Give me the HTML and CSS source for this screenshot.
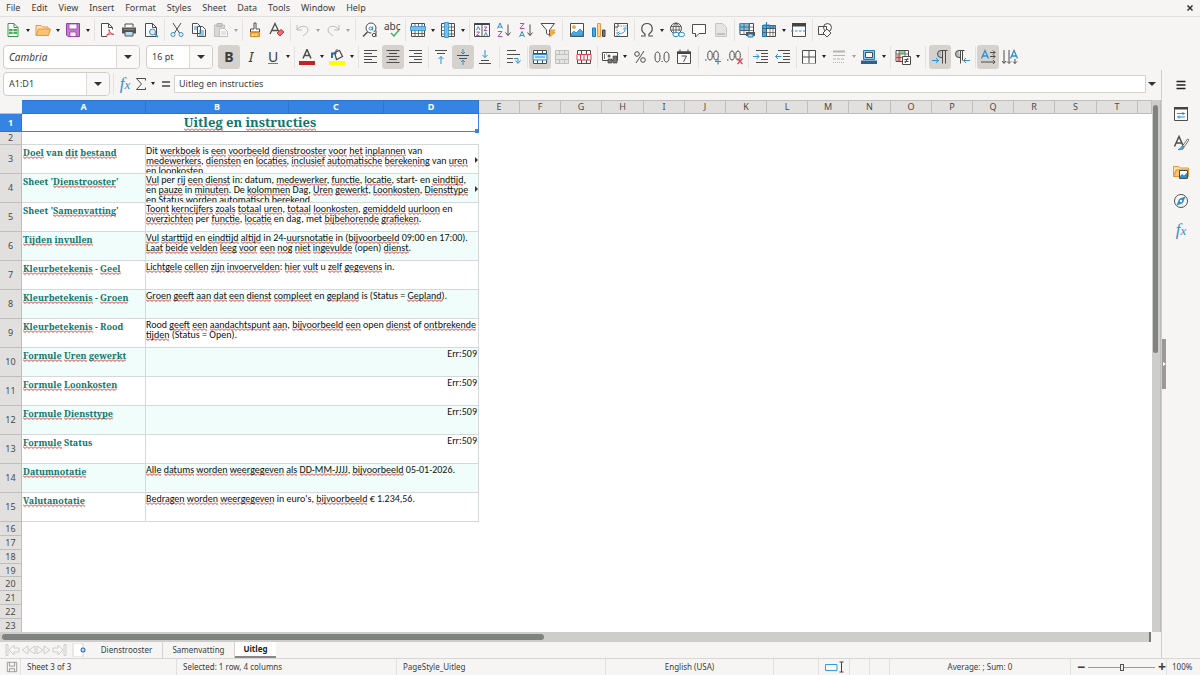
FILE: index.html
```html
<!DOCTYPE html>
<html lang="nl">
<head>
<meta charset="utf-8">
<title>Dienstrooster - Uitleg</title>
<link rel="stylesheet" href="styles.css">
</head>
<body>
<div class="app">
<nav class="menubar" aria-label="Menu">
<button>File</button><button>Edit</button><button>View</button><button>Insert</button><button>Format</button><button>Styles</button><button>Sheet</button><button>Data</button><button>Tools</button><button>Window</button><button>Help</button>
<button class="close" aria-label="Close"><svg viewBox="0 0 8 8" width="8" height="8"><path d="M1.5 1.5l5 5M6.500 1.500l-5 5" stroke="#2e3436" stroke-width="1.500"/></svg></button>
</nav>

<div class="toolbar standard" role="toolbar" aria-label="Standard">
<button class="tb" aria-label="New"><svg viewBox="0 0 16 16"><path class="w" d="M3 1.500h6l4 4v9H3z" stroke="#3a9b4e"/><path d="M9 1.500v4h4" stroke="#3a9b4e"/><path d="M4 7h8v5H4z" fill="#43b35a"/><path d="M4 9.500h8M8 7v5" stroke="#fff" stroke-width=".7"/></svg></button><button class="dd" aria-label="New options"></button>
<button class="tb" aria-label="Open"><svg viewBox="0 0 16 16"><path d="M1 13V3.500h5l1.500 1.500H13v2" fill="#fde3b4" stroke="#e8983a"/><path d="M1 13.500L3.500 7H15.500l-2 6.500z" fill="#fac373" stroke="#e8983a"/></svg></button><button class="dd" aria-label="Open options"></button>
<button class="tb" aria-label="Save"><svg viewBox="0 0 16 16"><path d="M1.500 1.500h13v13H3l-1.500-1.500z" fill="#c778d4" stroke="#9a3daa"/><path d="M4 2h8v5H4z" fill="#fff" stroke="#9a3daa" stroke-width=".8"/><path d="M5 10h6v4.500H5z" fill="#fff" stroke="#9a3daa" stroke-width=".8"/></svg></button><button class="dd" aria-label="Save options"></button>
<i class="sep"></i>
<button class="tb" aria-label="Export as PDF"><svg viewBox="0 0 16 16"><path class="w k" d="M2.500 1.500h7l4 4v9h-11z"/><path class="k" d="M9.500 1.500v4h4"/><path class="w" d="M8 7.500h8V16H8z"/><path d="M10 7.500c.5 2.500 2 4.500 5 5M10 7.500c1 3-.5 5.500-3 7M7.500 13c2-1 5-1.500 7.500-.500" stroke="#e0404c"/></svg></button>
<button class="tb" aria-label="Print"><svg viewBox="0 0 16 16"><path class="w k" d="M4 5V2h8v3"/><path d="M1 5.500h14v6H1z" fill="#555"/><path d="M4 9.500h8v4.500H4z" fill="#b9ddf4" stroke="#555"/><path d="M3 7.500h10" stroke="#36a0dc"/></svg></button>
<button class="tb" aria-label="Print preview"><svg viewBox="0 0 16 16"><path class="w k" d="M2.500 1.500h7l4 4v9h-11z"/><path class="k" d="M9.500 1.500v4h4"/><circle cx="9.500" cy="10" r="3" fill="#d8edfa" stroke="#2f8fd0"/><path d="M12 12l3 3" stroke="#2f8fd0" stroke-width="1.500"/></svg></button>
<i class="sep"></i>
<button class="tb" aria-label="Cut"><svg viewBox="0 0 16 16"><path class="k" d="M4 1l6.500 10M12 1L5.500 11"/><circle cx="4" cy="12.500" r="2" stroke="#2f8fd0"/><circle cx="12" cy="12.500" r="2" stroke="#2f8fd0"/></svg></button>
<button class="tb" aria-label="Copy"><svg viewBox="0 0 16 16"><path class="w k" d="M1.500 1.500h5l3 3v7h-8zM6.500 4.500h5l3 3v7h-8z"/><path d="M3 5h3M3 7h3M8 9h5M8 11h5M8 13h5" stroke="#2f8fd0"/></svg></button>
<button class="tb dim" aria-label="Paste" disabled><svg viewBox="0 0 16 16"><path d="M1.500 3h10v11.500h-10z" fill="#ccc" stroke="#aaa"/><path d="M4 1.500h5v3H4z" fill="#bbb" stroke="#999"/><path class="w" d="M6.500 6.500h5l3 3v5h-8z" stroke="#aaa"/><path d="M8 10h5M8 12h5" stroke="#bbb"/></svg></button><button class="dd dim" aria-label="Paste options" disabled></button>
<i class="sep"></i>
<button class="tb" aria-label="Clone formatting"><svg viewBox="0 0 16 16"><path class="w k" d="M7 1h2v6h3.500v3h-9V7H7z"/><path d="M3.500 10.500h9v4H3.500z" fill="#f7b24a" stroke="#d98a20"/><path d="M6 12v2M9 12v2" stroke="#fff"/></svg></button>
<button class="tb" aria-label="Clear formatting"><svg viewBox="0 0 16 16"><path class="k" d="M1 12L6 1.500 10 10M3 8.500h6" stroke-width="1.300"/><path d="M8 11l4-3.500 3 2.500-4 4z" fill="#f06a70" stroke="#d9303a"/></svg></button>
<i class="sep"></i>
<button class="tb dim" aria-label="Undo" disabled><svg viewBox="0 0 16 16"><path d="M2 3v5h5M2 8c3-5 11-5 11 0 0 3-3 4-5 6" stroke="#a4a3a2"/></svg></button><button class="dd dim" aria-label="Undo list" disabled></button>
<button class="tb dim" aria-label="Redo" disabled><svg viewBox="0 0 16 16"><path d="M14 3v5H9M14 8C11 3 3 3 3 8c0 3 3 4 5 6" stroke="#a4a3a2"/></svg></button><button class="dd dim" aria-label="Redo list" disabled></button>
<i class="sep wide"></i>
<button class="tb" aria-label="Find and replace"><svg viewBox="0 0 16 16"><circle cx="9" cy="6" r="5" class="w k"/><path class="k" d="M5.500 10L1 14.500" stroke-width="1.500"/><circle cx="8.500" cy="6.500" r="1.500" stroke="#2f8fd0"/><path d="M10.500 4.500v4" stroke="#2f8fd0"/><path class="w" d="M9.500 10h6v6h-6z"/><circle cx="12" cy="13" r="1.700" class="w k"/><path class="k" d="M14 8.500V15"/></svg></button>
<button class="tb" aria-label="Spelling"><span class="abc">abc</span><svg class="tick" viewBox="0 0 16 16"><path d="M7 11l3 3 5-6" stroke="#3fae5c" stroke-width="1.400"/></svg></button>
<i class="sep"></i>
<button class="tb" aria-label="Row"><svg viewBox="0 0 16 16"><path class="w k" d="M1.500 1.500h13v13h-13z"/><path class="k" d="M1.500 11.500h13M5 1.500v13M8.500 1.500v13M12 1.500v13" stroke-width=".8"/><path d="M.5 4.500h15v4H.5z" fill="#79bdea" stroke="#2f8fd0" stroke-width=".8"/></svg></button><button class="dd" aria-label="Row options"></button>
<button class="tb" aria-label="Column"><svg viewBox="0 0 16 16"><path class="w k" d="M1.500 1.500h13v13h-13z"/><path class="k" d="M1.500 5h13M1.500 8.500h13M1.500 12h13M11.500 1.500v13" stroke-width=".8"/><path d="M4.500 .5h4v15h-4z" fill="#79bdea" stroke="#2f8fd0" stroke-width=".8"/></svg></button><button class="dd" aria-label="Column options"></button>
<i class="sep"></i>
<button class="tb" aria-label="Sort"><svg viewBox="0 0 16 16"><path class="w k" d="M.5 1.500h15v13H.5zM8 2v12"/><path d="M.5 1h15v2H.5z" fill="#444"/><path d="M2.500 8L4.200 4.500 6 8M10 14l1.800-3.500L13.500 14" stroke="#2f8fd0"/><path d="M2.500 10h3l-3 3.500h3M10 5h3l-3 3.500h3" stroke="#b04cc0"/></svg></button>
<button class="tb" aria-label="Sort ascending"><svg viewBox="0 0 16 16"><path d="M1.500 6.500L4 1l2.500 5.500M2.300 5h3.400" stroke="#2f8fd0"/><path d="M2 9.500h4l-4 5h4.500" stroke="#b04cc0"/><path class="k" d="M12 2.500v11M9.500 10.500l2.500 3 2.500-3"/></svg></button>
<button class="tb" aria-label="Sort descending"><svg viewBox="0 0 16 16"><path d="M1.500 15L4 9.500 6.500 15M2.300 13.500h3.400" stroke="#2f8fd0"/><path d="M2 1.500h4l-4 5h4.500" stroke="#b04cc0"/><path class="k" d="M12 2.500v11M9.500 10.500l2.500 3 2.500-3"/></svg></button>
<button class="tb" aria-label="AutoFilter"><svg viewBox="0 0 16 16"><path class="w k" d="M1 1.500h13.500L9.500 8v5.500l-3-2V8z"/><path d="M11 8h4l-2 2.500h2L9.500 15l1.500-4H9.500z" fill="#f7b24a" stroke="#e08d25" stroke-width=".7"/></svg></button>
<i class="sep wide"></i>
<button class="tb" aria-label="Insert image"><svg viewBox="0 0 16 16"><path class="w k" d="M1.500 1.500h13v13h-13z"/><path d="M2 14v-2l3-3 2 2 4-4 3 3v4z" fill="#4ba7e0" stroke="#1e7cb8" stroke-width=".7"/><circle cx="5" cy="5" r="1.500" fill="#f7b24a" stroke="#e08d25" stroke-width=".6"/></svg></button>
<button class="tb" aria-label="Insert chart"><svg viewBox="0 0 16 16"><path d="M1.500 6h3v8.500h-3z" fill="#4ba7e0" stroke="#1e7cb8"/><path d="M6.500 1.500h3v13h-3z" fill="#fad29a" stroke="#e8983a"/><path d="M11.500 8h2.500v6.500h-2.500z" fill="#777" stroke="#444"/></svg></button>
<button class="tb" aria-label="Pivot table"><svg viewBox="0 0 16 16"><path class="w k" d="M1.500 1.500h13v13h-13zM5 1.500v3.500H1.500"/><path d="M5 4h9M4 5v9" stroke="#888" stroke-dasharray="1.500 1"/><path d="M6 11.500c4 0 6-1 6-5M4.500 11.500l2-2M4.500 11.500l2 2M12 5.500l-2 2M12 5.500l2 2" stroke="#2f8fd0"/></svg></button>
<i class="sep"></i>
<button class="tb" aria-label="Special character"><svg viewBox="0 0 16 16"><path class="k" d="M2 14h4v-2C1 9 2 1.500 8 1.500s7 7.500 2 10.500v2h4" stroke-width="1.200"/></svg></button><button class="dd" aria-label="Special character options"></button>
<button class="tb" aria-label="Hyperlink"><svg viewBox="0 0 16 16"><circle class="k" cx="7" cy="6.500" r="5.500"/><path class="k" d="M7 1v9M2 4.500h10M1.500 8h10M7 1C3.500 4 3.500 8 5 11M7 1c3.500 3 3.500 6 3 8" stroke-width=".8"/><path class="w" d="M5 10.500h4v4H5zM11 10.500h4v4h-4z" stroke="none"/><rect x="4" y="10.500" width="6" height="4" rx="2" stroke="#2f8fd0"/><rect x="9.500" y="10.500" width="6" height="4" rx="2" stroke="#2f8fd0"/></svg></button>
<button class="tb" aria-label="Comment"><svg viewBox="0 0 16 16"><path class="w k" d="M1.500 2.500h13v9H8L4.500 15v-3.500h-3z"/></svg></button>
<button class="tb dim" aria-label="Headers and footers" disabled><svg viewBox="0 0 16 16"><path d="M2.500 1.500h7l4 4v9h-11z" fill="#ddd" stroke="#b0b0b0"/><path d="M4 11h8v2H4z" fill="#aaa"/></svg></button>
<i class="sep"></i>
<button class="tb" aria-label="Print area"><svg viewBox="0 0 16 16"><path class="w k" d="M1 1.500h13.500v11H1z"/><path d="M1 1.500h9.500v7H1z" fill="#79bdea" stroke="#2f8fd0"/><path class="k" d="M1 5h13.500M1 8.500h13.500M5 1.500v11M10 1.500v11" stroke-width=".7"/><path d="M7 10h9v4H7z" fill="#555"/><path d="M9 12h5v3H9z" fill="#b9ddf4" stroke="#2876ad"/></svg></button>
<button class="tb" aria-label="Freeze rows and columns"><svg viewBox="0 0 16 16"><path class="w k" d="M1.500 3.500h13v11h-13z"/><path d="M1.500 3.500h13v3h-9v8h-4z" fill="#4ba7e0" stroke="#1e7cb8"/><path class="k" d="M5.500 3.500v11M9 3.500v11M12 3.500v11M1.500 6.500h13M1.500 10.500h13" stroke-width=".7"/><path d="M5.500 0v6M2.500 3l6 0" stroke="#1e7cb8"/></svg></button><button class="dd" aria-label="Freeze options"></button>
<button class="tb" aria-label="Split window"><svg viewBox="0 0 16 16"><path class="w k" d="M1.500 1.500h13v13h-13z"/><path d="M1 1h14v3.500H1z" fill="#444"/><path d="M0 9h16" stroke="#2f8fd0" stroke-dasharray="2.500 1.500"/></svg></button>
<i class="sep"></i>
<button class="tb" aria-label="Draw functions"><svg viewBox="0 0 16 16"><path class="k" d="M1.500 4.500h8v8h-8z"/><circle class="k" cx="10.500" cy="5.500" r="4"/><path class="w k" d="M10 7l4 4-4 4-4-4z"/></svg></button>
</div>

<div class="toolbar format" role="toolbar" aria-label="Formatting">
<div class="combo font"><input aria-label="Font name" value="Cambria"><button aria-label="Font list"></button></div>
<div class="combo size"><input aria-label="Font size" value="16 pt"><button aria-label="Size list"></button></div>
<button class="tb on letter" aria-label="Bold"><b>B</b></button>
<button class="tb letter" aria-label="Italic"><em>I</em></button>
<button class="tb letter" aria-label="Underline"><span class="ul">U</span></button><button class="dd" aria-label="Underline options"></button>
<i class="sep"></i>
<button class="tb" aria-label="Font colour"><svg viewBox="0 0 16 16"><path class="k" d="M4 9.500L8 .5l4 9M5.500 6.500h5" stroke-width="1.500"/><path d="M0 12h16v4H0z" fill="#c9211e"/></svg></button><button class="dd" aria-label="Font colour options"></button>
<button class="tb" aria-label="Background colour"><svg viewBox="0 0 16 16"><path class="w k" d="M5.500 3.500l5-2 3 6-6 3z" stroke-width="1.300"/><path d="M3 9V4.500h4" stroke="#2f6fa8" stroke-width="2"/><path class="k" d="M7 5V1.500c0-1 2-1 2 0"/><path d="M0 12h16v4H0z" fill="#ff0"/></svg></button><button class="dd" aria-label="Background colour options"></button>
<i class="sep"></i>
<button class="tb" aria-label="Align left"><svg viewBox="0 0 16 16"><path class="k" d="M1 1.500h13M1 4.500h8M1 7.500h13M1 10.500h8M1 13.500h13"/></svg></button>
<button class="tb on" aria-label="Center horizontally"><svg viewBox="0 0 16 16"><path class="k" d="M1.500 1.500h13M4 4.500h8M1.500 7.500h13M4 10.500h8M1.500 13.500h13"/></svg></button>
<button class="tb" aria-label="Align right"><svg viewBox="0 0 16 16"><path class="k" d="M2 1.500h13M7 4.500h8M2 7.500h13M7 10.500h8M2 13.500h13"/></svg></button>
<i class="sep"></i>
<button class="tb" aria-label="Align top"><svg viewBox="0 0 16 16"><path class="k" d="M2 1.500h12M4 4.500h8"/><path d="M8 15V7.500M5.500 10L8 7.500l2.500 2.500" stroke="#2f8fd0"/></svg></button>
<button class="tb on" aria-label="Center vertically"><svg viewBox="0 0 16 16"><path class="k" d="M2 6.500h12M4 9.500h8"/><path d="M8 0v5M6 3l2 2 2-2M8 16v-5M6 13l2-2 2 2" stroke="#2f8fd0"/></svg></button>
<button class="tb" aria-label="Align bottom"><svg viewBox="0 0 16 16"><path class="k" d="M2 14.500h12M4 11.500h8"/><path d="M8 1v7.500M5.500 6L8 8.500 10.500 6" stroke="#2f8fd0"/></svg></button>
<i class="sep wide"></i>
<button class="tb" aria-label="Wrap text"><svg viewBox="0 0 16 16"><path class="k" d="M1 1.500h9M1 5.500h13M1 9.500h6M1 13.500h6"/><path d="M8 9.500h4v4M9.500 11.500l2.500 3 2.500-3" stroke="#2f8fd0"/></svg></button>
<i class="sep"></i>
<button class="tb on" aria-label="Merge cells"><svg viewBox="0 0 16 16"><path class="w k" d="M1.500 1.500h13v13h-13zM5.500 1.500v13M10.500 1.500v13M1.500 4.500h13"/><path d="M1 5.500h14v5.500H1z" fill="#d8edfa" stroke="#2f8fd0"/><path d="M3 8h10" stroke="#2f8fd0"/></svg></button>
<button class="tb dim" aria-label="Merge and center" disabled><svg viewBox="0 0 16 16"><path d="M1.500 1.500h13v13h-13zM5.500 1.500v4M10.500 1.500v4M5.500 10.500v4M10.500 10.500v4M1.500 5.500h13M1.500 10.500h13" fill="#ddd" stroke="#aaa"/></svg></button>
<button class="tb" aria-label="Split cells"><svg viewBox="0 0 16 16"><path class="w k" d="M1.500 1.500h13v13h-13zM5.500 1.500v13M10.500 1.500v13"/><path class="w" d="M1 5.500h14v5.500H1zM4.500 5.500V11M8 5.500V11M11.500 5.500V11" stroke="#e0404c"/></svg></button>
<i class="sep"></i>
<button class="tb" aria-label="Currency format"><svg viewBox="0 0 16 16"><path class="w k" d="M.5 3.500h15v8H.5z"/><circle cx="7" cy="7" r="1.500" fill="#555"/><path d="M2.500 5v5M4 5h1" stroke="#777"/><path d="M6 10h4v4H6zM11 7h4v7h-4z" fill="#777" stroke="#333" stroke-width=".6"/></svg></button><button class="dd" aria-label="Currency options"></button>
<button class="tb" aria-label="Percent format"><svg viewBox="0 0 16 16"><circle class="k" cx="5" cy="5" r="2.300"/><circle class="k" cx="11" cy="11" r="2.300"/><path class="k" d="M12 2L4 14"/></svg></button>
<button class="tb" aria-label="Number format"><svg viewBox="0 0 16 16"><ellipse class="k" cx="3.500" cy="8" rx="2.500" ry="5"/><ellipse class="k" cx="12.500" cy="8" rx="2.500" ry="5"/><path class="k" d="M7.500 12.500h1.200"/></svg></button>
<button class="tb" aria-label="Date format"><svg viewBox="0 0 16 16"><path class="w k" d="M1.500 3h13v11.500h-13z"/><path d="M1 2.500h14V5H1z" fill="#444"/><path class="k" d="M4 .5v3M12 .5v3M5.500 7h5l-3 6"/></svg></button>
<i class="sep wide"></i>
<button class="tb" aria-label="Add decimal place"><svg viewBox="0 0 16 16"><ellipse class="k" cx="5" cy="6.500" rx="2.300" ry="4.500"/><ellipse class="k" cx="11" cy="6.500" rx="2.300" ry="4.500"/><path d="M0 11h1.500" stroke="#444"/><path d="M10 12.500h6M13 9.500v6" stroke="#2f8fd0" stroke-width="1.200"/></svg></button>
<button class="tb" aria-label="Delete decimal place"><svg viewBox="0 0 16 16"><ellipse class="k" cx="5" cy="6.500" rx="2.300" ry="4.500"/><ellipse class="k" cx="11" cy="6.500" rx="2.300" ry="4.500"/><path d="M0 11h1.500" stroke="#444"/><path d="M10.500 9.500l5 5.500M15.500 9.500l-5 5.500" stroke="#e0404c" stroke-width="1.200"/></svg></button>
<i class="sep"></i>
<button class="tb" aria-label="Increase indent"><svg viewBox="0 0 16 16"><path class="k" d="M3 1.500h12M8 4.500h7M8 7.500h7M8 10.500h7M3 13.500h12"/><path d="M0 7.500h6M3.500 5L6 7.500 3.500 10" stroke="#2f8fd0"/></svg></button>
<button class="tb" aria-label="Decrease indent"><svg viewBox="0 0 16 16"><path class="k" d="M3 1.500h12M8 4.500h7M8 7.500h7M8 10.500h7M3 13.500h12"/><path d="M6.500 7.500h-6M3 5L.5 7.500 3 10" stroke="#2f8fd0"/></svg></button>
<i class="sep"></i>
<button class="tb" aria-label="Borders"><svg viewBox="0 0 16 16"><path class="w k" d="M1.500 1.500h13v13h-13zM8 1.500v13M1.500 8h13"/><path d="M1.500 14.500h13" stroke="#e8983a"/></svg></button><button class="dd" aria-label="Border options"></button>
<button class="tb dim" aria-label="Border style" disabled><svg viewBox="0 0 16 16"><path d="M2 2.500h12" stroke="#999" stroke-width="2"/><path d="M2 6.500h12" stroke="#999"/><path d="M2 10h12" stroke="#999" stroke-dasharray="3 1"/><path d="M2 13.500h12" stroke="#999" stroke-dasharray="1 1"/></svg></button><button class="dd dim" aria-label="Border style options" disabled></button>
<button class="tb" aria-label="Border colour"><svg viewBox="0 0 16 16"><path d="M2.500 1.500h11v9h-11z" fill="#8cc8ee" stroke="#1e7cb8"/><path class="w k" d="M4.500 3.500h7v5h-7z"/><path d="M0 11.500h16V15H0z" fill="#2a6099"/></svg></button><button class="dd" aria-label="Border colour options"></button>
<i class="sep"></i>
<button class="tb" aria-label="Conditional formatting"><svg viewBox="0 0 16 16"><path class="w k" d="M1 1.500h12.500v11H1z"/><path d="M4 2h6v3H4z" fill="#7ed491"/><path d="M1.500 5.500H6V12H1.500z" fill="#f29a9a"/><path class="k" d="M1 5h12.500M1 8.500h12.500M4 1.500v11M10 1.500v11" stroke-width=".7"/><path class="w k" d="M7.500 7.500h8v8h-8zM9.500 10.500h4M9.500 12.500h4M13 9l-3 5"/></svg></button><button class="dd" aria-label="Conditional options"></button>
<i class="sep wide"></i>
<button class="tb on" aria-label="Left to right"><svg viewBox="0 0 16 16"><path d="M9 1.500a3.500 3.500 0 000 7z" fill="#bbb"/><path class="k" d="M15.500 1.500H9a3.500 3.500 0 000 7h1M10.500 1.500v13M13.500 1.500v13"/><path d="M0 11.500h6.500M4 9l2.500 2.500L4 14" stroke="#2f8fd0"/></svg></button>
<button class="tb" aria-label="Right to left"><svg viewBox="0 0 16 16"><path d="M5 1.500a3.500 3.500 0 000 7h1z" fill="#bbb"/><path class="k" d="M10.500 1.500H5a3.500 3.500 0 000 7h1M6.500 1.500v13M8.500 1.500v10"/><path d="M16 11.500H9.500M12 9l-2.500 2.500L12 14" stroke="#2f8fd0"/></svg></button>
<i class="sep"></i>
<button class="tb on" aria-label="Text direction horizontal"><svg viewBox="0 0 16 16"><path d="M1.500 9.500l3.500-8 3.500 8M2.500 7h5" stroke="#2f8fd0" stroke-width="1.300"/><path class="k" d="M10 3.500h5M13 1.500l2 2-2 2M10 7.500h5M13 5.500l2 2-2 2M1 13h14M13 11l2 2-2 2"/></svg></button>
<button class="tb" aria-label="Text direction vertical"><svg viewBox="0 0 16 16"><path d="M8.500 9.500l3.500-8 3.500 8M9.500 7h5" stroke="#2f8fd0" stroke-width="1.300"/><path class="k" d="M2 1v13M0 12l2 2.500L4 12M7 1v13M5 12.500l2 2 2-2M13 10v4.500M11 12.500l2 2 2-2"/></svg></button>
</div>

<div class="body">
<main class="main">
<div class="formula">
<div class="combo name"><input aria-label="Name box" value="A1:D1"><button aria-label="Named ranges"></button></div>
<i class="sep"></i>
<button class="fx" aria-label="Function wizard">f<small>x</small></button>
<button class="sigma" aria-label="Select function"><svg viewBox="0 0 12 14" width="12" height="14"><path class="k" d="M10.500 3.500v-2h-9L6.500 7l-5 5.500h9v-2"/></svg></button><button class="dd" aria-label="Function options"></button>
<button class="eq" aria-label="Formula"><svg viewBox="0 0 10 8" width="10" height="8"><path d="M1 2h8M1 6h8" stroke="#444" stroke-width="1.300"/></svg></button>
<input class="line" aria-label="Input line" value="Uitleg en instructies">
<button class="dd big" aria-label="Expand formula bar"></button>
</div>
<div class="view">
<div class="sheet">
<table>
<colgroup><col class="c-h"><col class="c-a"><col class="c-b"><col class="c-c"><col class="c-c"><col class="c-n"><col class="c-n"><col class="c-n"><col class="c-w"><col class="c-n"><col class="c-n"><col class="c-n"><col class="c-n"><col class="c-n"><col class="c-w"><col class="c-n"><col class="c-n"><col class="c-n"><col class="c-n"><col class="c-w"><col class="c-n"><col></colgroup>
<thead><tr><td class="corner"></td><th class="sel">A</th><th class="sel">B</th><th class="sel">C</th><th class="sel">D</th><th>E</th><th>F</th><th>G</th><th>H</th><th>I</th><th>J</th><th>K</th><th>L</th><th>M</th><th>N</th><th>O</th><th>P</th><th>Q</th><th>R</th><th>S</th><th>T</th><th></th></tr></thead>
<tbody>
<tr class="r1"><th class="sel">1</th><td class="title" colspan="4"><u>Uitleg</u> en <u>instructies</u></td></tr>
<tr class="r2"><th>2</th><td class="under" colspan="4"></td></tr>
<tr class="r"><th>3</th><td class="a"><u>Doel</u> van <u>dit</u> <u>bestand</u></td><td class="b more" colspan="3"><div>Dit <u>werkboek</u> is <u>een</u> <u>voorbeeld</u> <u>dienstrooster</u> <u>voor</u> <u>het</u> <u>inplannen</u> van<br><u>medewerkers</u>, <u>diensten</u> en <u>locaties</u>, <u>inclusief</u> <u>automatische</u> <u>berekening</u> van <u>uren</u><br><u>en</u> <u>loonkosten</u>.</div></td></tr>
<tr class="r alt"><th>4</th><td class="a">Sheet '<u>Dienstrooster</u>'</td><td class="b more" colspan="3"><div><u>Vul</u> per <u>rij</u> <u>een</u> <u>dienst</u> in: datum, <u>medewerker</u>, <u>functie</u>, <u>locatie</u>, start- en <u>eindtijd</u>,<br>en <u>pauze</u> in <u>minuten</u>. De <u>kolommen</u> Dag, <u>Uren</u> <u>gewerkt</u>, <u>Loonkosten</u>, <u>Diensttype</u><br>en Status <u>worden</u> <u>automatisch</u> <u>berekend</u>.</div></td></tr>
<tr class="r"><th>5</th><td class="a">Sheet '<u>Samenvatting</u>'</td><td class="b" colspan="3"><div><u>Toont</u> <u>kerncijfers</u> <u>zoals</u> <u>totaal</u> <u>uren</u>, <u>totaal</u> <u>loonkosten</u>, <u>gemiddeld</u> <u>uurloon</u> en<br><u>overzichten</u> per <u>functie</u>, <u>locatie</u> en dag, met <u>bijbehorende</u> <u>grafieken</u>.</div></td></tr>
<tr class="r alt"><th>6</th><td class="a"><u>Tijden</u> <u>invullen</u></td><td class="b" colspan="3"><div><u>Vul</u> <u>starttijd</u> en <u>eindtijd</u> <u>altijd</u> in 24-<u>uursnotatie</u> in (<u>bijvoorbeeld</u> 09:00 en 17:00).<br><u>Laat</u> <u>beide</u> <u>velden</u> <u>leeg</u> <u>voor</u> <u>een</u> <u>nog</u> <u>niet</u> <u>ingevulde</u> (open) <u>dienst</u>.</div></td></tr>
<tr class="r"><th>7</th><td class="a"><u>Kleurbetekenis</u> - <u>Geel</u></td><td class="b" colspan="3"><div><u>Lichtgele</u> <u>cellen</u> <u>zijn</u> <u>invoervelden</u>: <u>hier</u> <u>vult</u> u <u>zelf</u> <u>gegevens</u> in.</div></td></tr>
<tr class="r alt"><th>8</th><td class="a"><u>Kleurbetekenis</u> - <u>Groen</u></td><td class="b" colspan="3"><div><u>Groen</u> <u>geeft</u> <u>aan</u> <u>dat</u> <u>een</u> <u>dienst</u> <u>compleet</u> en <u>gepland</u> is (Status = <u>Gepland</u>).</div></td></tr>
<tr class="r"><th>9</th><td class="a"><u>Kleurbetekenis</u> - Rood</td><td class="b" colspan="3"><div>Rood <u>geeft</u> <u>een</u> <u>aandachtspunt</u> <u>aan</u>, <u>bijvoorbeeld</u> <u>een</u> open <u>dienst</u> of <u>ontbrekende</u><br><u>tijden</u> (Status = Open).</div></td></tr>
<tr class="r alt"><th>10</th><td class="a"><u>Formule</u> <u>Uren</u> <u>gewerkt</u></td><td class="b err" colspan="3"><div>Err:509</div></td></tr>
<tr class="r"><th>11</th><td class="a"><u>Formule</u> <u>Loonkosten</u></td><td class="b err" colspan="3"><div>Err:509</div></td></tr>
<tr class="r alt"><th>12</th><td class="a"><u>Formule</u> <u>Diensttype</u></td><td class="b err" colspan="3"><div>Err:509</div></td></tr>
<tr class="r"><th>13</th><td class="a"><u>Formule</u> Status</td><td class="b err" colspan="3"><div>Err:509</div></td></tr>
<tr class="r alt"><th>14</th><td class="a"><u>Datumnotatie</u></td><td class="b" colspan="3"><div><u>Alle</u> <u>datums</u> <u>worden</u> <u>weergegeven</u> <u>als</u> <u>DD-MM-JJJJ</u>, <u>bijvoorbeeld</u> 05-01-2026.</div></td></tr>
<tr class="r"><th>15</th><td class="a"><u>Valutanotatie</u></td><td class="b" colspan="3"><div><u>Bedragen</u> <u>worden</u> <u>weergegeven</u> in euro's, <u>bijvoorbeeld</u> € 1.234,56.</div></td></tr>
<tr class="e"><th>16</th></tr><tr class="e"><th>17</th></tr><tr class="e"><th>18</th></tr><tr class="e short"><th>19</th></tr><tr class="e"><th>20</th></tr><tr class="e"><th>21</th></tr><tr class="e"><th>22</th></tr><tr class="e"><th>23</th></tr>
</tbody>
</table>
</div>
<div class="vscroll"><span></span></div>
</div>
<div class="hscroll"><span></span></div>
<div class="tabs">
<div class="nav">
<button aria-label="First sheet"><svg viewBox="0 0 15 12"><path d="M1 .5v11h2V.5zM4 6l5-5v3h5v4H9v3z"/></svg></button><button aria-label="Previous sheet"><svg viewBox="0 0 15 12"><path d="M1 6l6-4v8zM8 6l6-4v8z"/></svg></button><button aria-label="Next sheet"><svg viewBox="0 0 15 12"><path d="M7 6L1 2v8zM14 6L8 2v8z"/></svg></button><button aria-label="Last sheet"><svg viewBox="0 0 15 12"><path d="M14 .5v11h-2V.5zM11 6L6 1v3H1v4h5v3z"/></svg></button>
</div>
<button class="add" aria-label="Add sheet"><svg viewBox="0 0 14 14" width="14" height="14"><path d="M1 0h9l1 2v12H1z" fill="#fff" stroke="#d8d6d4"/><circle cx="11" cy="7" r="2.500" fill="#2a6fb5"/><path d="M11 5.500v3M9.500 7h3" stroke="#fff"/></svg></button>
<button class="tab">Dienstrooster</button><button class="tab">Samenvatting</button><button class="tab active">Uitleg</button>
</div>
</main>
<aside class="side" aria-label="Sidebar">
<button class="handle" aria-label="Hide sidebar"></button>
<button aria-label="Sidebar settings"><svg viewBox="0 0 16 16"><path d="M3.500 4.500h9M3.500 8h9M3.500 11.500h9" stroke="#222" stroke-width="1.300"/></svg></button>
<button aria-label="Properties"><svg viewBox="0 0 16 16"><path class="w k" d="M1.500 1.500h13v13h-13z"/><path d="M1 1h14v2.500H1z" fill="#444"/><path d="M4 7.500h8M10 6v3M4 11h8M6 9.500v3" stroke="#2f8fd0"/></svg></button>
<button aria-label="Styles"><svg viewBox="0 0 16 16"><path class="k" d="M1.500 11.500L6 1.500l4 9M3 8h6" stroke-width="1.500"/><path class="w k" d="M14.500 4L16 5l-5 7-1.500-1z" stroke-width=".8"/><path d="M5 14.500c3 0 2.500-3 4.500-3.500l1.500 1c0 2.500-3 3-6 2.500z" fill="#4ba7e0" stroke="#1e7cb8" stroke-width=".7"/></svg></button>
<button aria-label="Gallery"><svg viewBox="0 0 16 16"><path d="M.5 13V2.500h5L7 4h8.500v2H3z" fill="#fde3b4" stroke="#e8983a"/><path d="M.5 12.500l3-6.500h12v6.500z" fill="#fac373" stroke="#e8983a"/><path class="w k" d="M6.500 6.500h8v8h-8z"/><path d="M7 14v-2l2-2 2 1.500 3-3V14z" fill="#2f8fd0"/></svg></button>
<button aria-label="Navigator"><svg viewBox="0 0 16 16"><circle class="w k" cx="8" cy="8" r="6.500"/><path d="M12 4l-2.500 6L4 12l2.500-6z" fill="#2f8fd0" stroke="#1e7cb8" stroke-width=".6"/><circle cx="8" cy="8" r="1.200" fill="#fff"/></svg></button>
<button class="fx" aria-label="Functions">f<small>x</small></button>
</aside>
</div>

<footer class="status">
<div class="icon"><svg viewBox="0 0 14 14" width="12" height="12"><path d="M1.500 1.500h11v11h-11zM4 1.500V6h6V1.500M4 12.500V9h6v3.500" fill="none" stroke="#8e8d8b"/></svg></div>
<div>Sheet 3 of 3</div><div>Selected: 1 row, 4 columns</div><div>PageStyle_Uitleg</div><div class="mid">English (USA)</div><div></div>
<div class="icon"><svg viewBox="0 0 20 12" width="20" height="12"><path d="M.5 3.500h11.500v6H.5z" fill="#f4fafe" stroke="#3a9ad9"/><path d="M14.500 1h4M16.500 1v10M14.500 11h4" stroke="#444"/></svg></div>
<div></div><div></div><div class="mid">Average: ; Sum: 0</div>
<div class="zoom"><button aria-label="Zoom out">−</button><input type="range" aria-label="Zoom" min="0" max="100" value="50"><button aria-label="Zoom in">+</button></div>
<div class="pct">100%</div>
</footer>
</div>
</body>
</html>
```
FILE: styles.css
```css
* { box-sizing: border-box; }
html, body { margin: 0; height: 100%; }
body { font: 9px/12px "Noto Sans", sans-serif; color: #3c3c3a; background: #f6f5f4; overflow: hidden; }
button, input { font: inherit; color: inherit; border: 0; background: none; padding: 0; margin: 0; }
button { display: flex; align-items: center; justify-content: center; flex: none; }
svg { fill: none; display: block; }
svg .k { stroke: #4d4d4b; }
svg .w { fill: #fcfcfc; }

.app { display: flex; flex-direction: column; height: 100vh; }

.menubar { display: flex; gap: 11px; padding: 0 6px; height: 17px; border-bottom: 1px solid #e2e0de; flex: none; }
.menubar .close { margin-left: auto; }

.toolbar { display: flex; align-items: center; height: 27px; padding-left: 2px; flex: none; }
.standard { height: 26px; }
.tb { width: 22px; height: 24px; border-radius: 3px; position: relative; }
.tb svg { width: 16px; height: 16px; }
.tb.on { background: #d5d1cd; }
.tb.dim { opacity: .7; }
.dd { width: 8px; height: 20px; }
.dd::after { content: ""; border: 2px solid transparent; border-top: 3px solid #222; border-bottom: 0; }
.dd.dim { opacity: .4; }
.sep { width: 1px; height: 22px; margin: 0 1px 0 2px; background: #e4e2e0; flex: none; }
.sep.wide { margin: 0 3px; }
.abc { position: absolute; top: 2px; left: 3px; font-size: 10px; line-height: 12px; }
.letter { font-size: 14px; }
.ul { border-bottom: 1px solid #2f8fd0; line-height: 13px; }

.combo { display: flex; height: 24px; border: 1px solid #d0cdca; border-radius: 4px; background: #fff; overflow: hidden; flex: none; }
.combo input { flex: 1; min-width: 0; padding-left: 5px; font-size: 9px; }
.combo button { width: 23px; border-left: 1px solid #dddad7; background: #f9f8f7; }
.combo button::after, .dd.big::after { content: ""; border: 4px solid transparent; border-top: 4px solid #2e3436; border-bottom: 0; }
.format { padding-left: 3px; }
.font { width: 137px; margin-right: 6px; }
.combo.font input { font-style: italic; font-size: 10px; }
.size { width: 67px; margin-right: 5px; }
.name { width: 107px; }

.body { display: flex; flex: 1; min-height: 0; }
.main { flex: 1; min-width: 0; display: flex; flex-direction: column; }
.formula { display: flex; align-items: center; height: 30px; padding: 0 5px 3px 3px; flex: none; }
.formula .sep { margin: 0 3px; }
.fx { width: 16px; color: #2f8fd0; font: italic 17px/18px "Liberation Serif", serif; }
.fx small { font-size: 13px; padding-top: 3px; }
.sigma { width: 16px; }
.eq { width: 17px; }
.line { flex: 1; min-width: 0; height: 18px; padding: 0 4px; margin-right: 2px; border: 1px solid #d5d2cf; background: #fff; }

.view { flex: 1; min-height: 0; display: flex; }
.sheet { flex: 1; min-width: 0; overflow: hidden; background: #fff; }
table { width: 100%; table-layout: fixed; border-collapse: separate; border-spacing: 0; }
.c-h { width: 22px; } .c-a { width: 124px; } .c-b { width: 143px; } .c-c { width: 95px; }
.c-n { width: 41px; } .c-w { width: 42px; }
td, th { padding: 0; }
th { background: #e1e0df; border-right: 1px solid #bfbebc; border-bottom: 1px solid #bfbebc; font-weight: 400; color: #4a4a48; line-height: 12px; }
thead th { height: 14px; border-top: 1px solid #bfbebc; }
.sel { background: #3584e4; border-color: #2b74cf; color: #fff; font-weight: 700; }
.corner { background: #f6f5f4; border-bottom: 1px solid #bfbebc; }
.r1 { height: 18px; } .r2 { height: 13px; } .r { height: 29px; } .e { height: 14px; } .e.short { height: 13px; }
.e.short th { line-height: 11px; }
td.title { border: solid #3584e4; border-width: 0 1px 1px 0; text-align: center; font: bold 13px/17px "Noto Serif", "DejaVu Serif Condensed", serif; color: #0f766e; position: relative; }
td.title::after { content: ""; position: absolute; right: -1px; bottom: -2px; width: 4px; height: 4px; background: #3584e4; }
td.under, td.a, td.b { border-bottom: 1px solid #d6d9d9; }
td.a, td.b { border-right: 1px solid #d6d9d9; vertical-align: top; white-space: nowrap; }
td.a { padding: 3px 0 0 1px; font: bold 9px/10px "Noto Serif", "DejaVu Serif Condensed", serif; color: #0f766e; }
td.b { font: 10px/10px Carlito, Lato, sans-serif; color: #111; position: relative; }
td.b div { height: 28px; padding: 1px 1px 0 0; overflow: hidden; }
.alt td { background: #f0fdfa; }
.err { text-align: right; }
.more::after { content: ""; position: absolute; right: 0; top: 12px; border: 3px solid transparent; border-left: 3px solid #333; border-right: 0; }
u { text-decoration: none; background: url("data:image/svg+xml,%3Csvg xmlns='http://www.w3.org/2000/svg' width='4' height='3'%3E%3Cpath d='M0 .5L2 2.500L4 .5' fill='none' stroke='%23d6302c'/%3E%3C/svg%3E") left bottom repeat-x; }

.vscroll { width: 9px; background: #cdcdcc; padding: 5px 2px 0 1px; border-right: 1px solid #bdbbb9; }
.vscroll span { display: block; height: 47%; border-radius: 3px; background: #808280; }
.hscroll { height: 10px; background: #cdcdcc; padding: 2px; margin-right: 10px; border-right: 2px solid #777; flex: none; }
.hscroll span { display: block; width: 47.3%; height: 6px; border-radius: 3px; background: #808280; }

.tabs { display: flex; height: 16px; padding-left: 5px; font-size: 8px; flex: none; }
.nav { display: flex; width: 62px; }
.nav button { flex: 1; }
.nav svg { width: 15px; height: 12px; stroke: #cfcdcb; }
.add { width: 24px; }
.tab { width: 72px; border-right: 1px solid #d5d2cf; }
.tab.active { width: 41px; background: #fff; border: 0; border-bottom: 2px solid #888; font-weight: 700; color: #222; }

.side { position: relative; width: 39px; border-left: 1px solid #cfcdcb; display: flex; flex-direction: column; align-items: center; flex: none; }
.side button { width: 29px; height: 29px; }
.side svg { width: 16px; height: 16px; }
.side .handle { position: absolute; left: 0; top: 50%; width: 4px; height: 50px; margin-top: -25px; background: #9a9a98; }
.handle::after { content: ""; border: 2px solid transparent; border-left: 3px solid #fff; border-right: 0; }

.status { display: grid; grid-template-columns: 21px 156fr 220fr 209fr 168fr 45px 31px 20px 20px 181fr 96px 33px; height: 17px; border-top: 1px solid #d8d6d4; font-size: 8px; flex: none; }
.status > div { display: flex; align-items: center; padding-left: 6px; border-right: 1px solid #e2e0de; white-space: nowrap; }
.status > .mid { justify-content: center; padding: 0; }
.status > .pct { border: 0; padding-left: 5px; }
.status .zoom { gap: 3px; }
.zoom button { width: 8px; font-size: 14px; font-weight: 700; }
.zoom input { appearance: none; flex: 1; min-width: 0; height: 8px; background: linear-gradient(#999, #999) center / 100% 1px no-repeat; }
.zoom input::-webkit-slider-thumb { appearance: none; width: 4px; height: 7px; border: 1px solid #555; background: #eee; }
```
